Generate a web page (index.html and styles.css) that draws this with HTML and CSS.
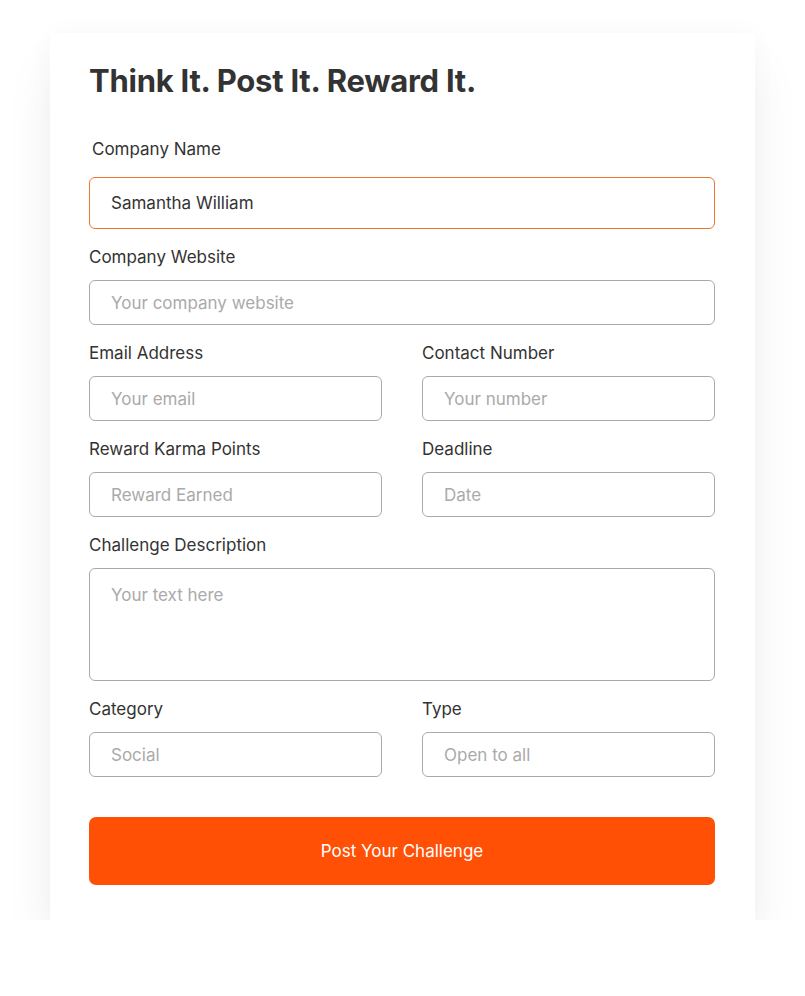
FILE: index.html
```html
<!doctype html>
<html lang="en">
  <head>
    <meta charset="UTF-8" />
    <meta name="viewport" content="width=device-width, initial-scale=1.0" />
    <title>Post a Challenge</title>
    <link rel="stylesheet" href="styles.css">
  </head>
  <body>
    <form class="card">
      <h1 class="title">Think It. Post It. Reward It.</h1>

      <div class="field">
        <label class="label label-first">Company Name</label>
        <input class="input input-active" type="text" value="Samantha William">
      </div>

      <div class="field">
        <label class="label">Company Website</label>
        <input class="input" type="text" placeholder="Your company website">
      </div>

      <div class="row">
        <div class="field">
          <label class="label">Email Address</label>
          <input class="input" type="text" placeholder="Your email">
        </div>
        <div class="field">
          <label class="label">Contact Number</label>
          <input class="input" type="text" placeholder="Your number">
        </div>
      </div>

      <div class="row">
        <div class="field">
          <label class="label">Reward Karma Points</label>
          <input class="input" type="text" placeholder="Reward Earned">
        </div>
        <div class="field">
          <label class="label">Deadline</label>
          <input class="input" type="text" placeholder="Date">
        </div>
      </div>

      <div class="field">
        <label class="label">Challenge Description</label>
        <textarea class="input textarea" placeholder="Your text here"></textarea>
      </div>

      <div class="row">
        <div class="field">
          <label class="label">Category</label>
          <input class="input" type="text" placeholder="Social">
        </div>
        <div class="field">
          <label class="label">Type</label>
          <input class="input" type="text" placeholder="Open to all">
        </div>
      </div>

      <button class="submit" type="button">Post Your Challenge</button>
    </form>
  </body>
</html>
```

FILE: styles.css
```css
body {
  margin: 0;
  background: #fff;
  font-family: "Inter", "Noto Sans", sans-serif;
  color: #333;
}
.card {
  box-sizing: border-box;
  width: 705px;
  margin: 33px 0 0 50px;
  padding: 29px 40px 35px 39px;
  background: #fff;
  box-shadow: 0 32px 48px rgba(0, 0, 0, 0.06), 0 0 24px rgba(0, 0, 0, 0.03);
  display: flex;
  flex-direction: column;
  gap: 17px;
}
.title {
  margin: 0 0 21px;
  font-size: 31px;
  font-weight: 700;
  line-height: 38px;
  letter-spacing: -0.25px;
  color: #333;
}
.row {
  display: grid;
  grid-template-columns: 1fr 1fr;
  gap: 40px;
}
.field {
  display: flex;
  flex-direction: column;
}
.label {
  font-size: 17px;
  line-height: 22px;
  margin-bottom: 12px;
  color: #333;
}
.label-first {
  margin-left: 3px;
  margin-bottom: 17px;
}
.input {
  box-sizing: border-box;
  height: 45px;
  width: 100%;
  padding: 0 21px;
  border: 1px solid #aaa;
  border-radius: 6px;
  font-family: inherit;
  font-size: 17px;
  color: #333;
  background: #fff;
  outline: none;
}
.input::placeholder {
  color: #aaa;
}
.input-active {
  height: 52px;
  border-color: #f07530;
}
.textarea {
  height: 113px;
  padding-top: 15px;
  resize: none;
  line-height: 22px;
}
.submit {
  margin-top: 23px;
  height: 68px;
  border: none;
  border-radius: 7px;
  background: #ff5005;
  color: #fff;
  font-family: inherit;
  font-size: 17px;
}
```
